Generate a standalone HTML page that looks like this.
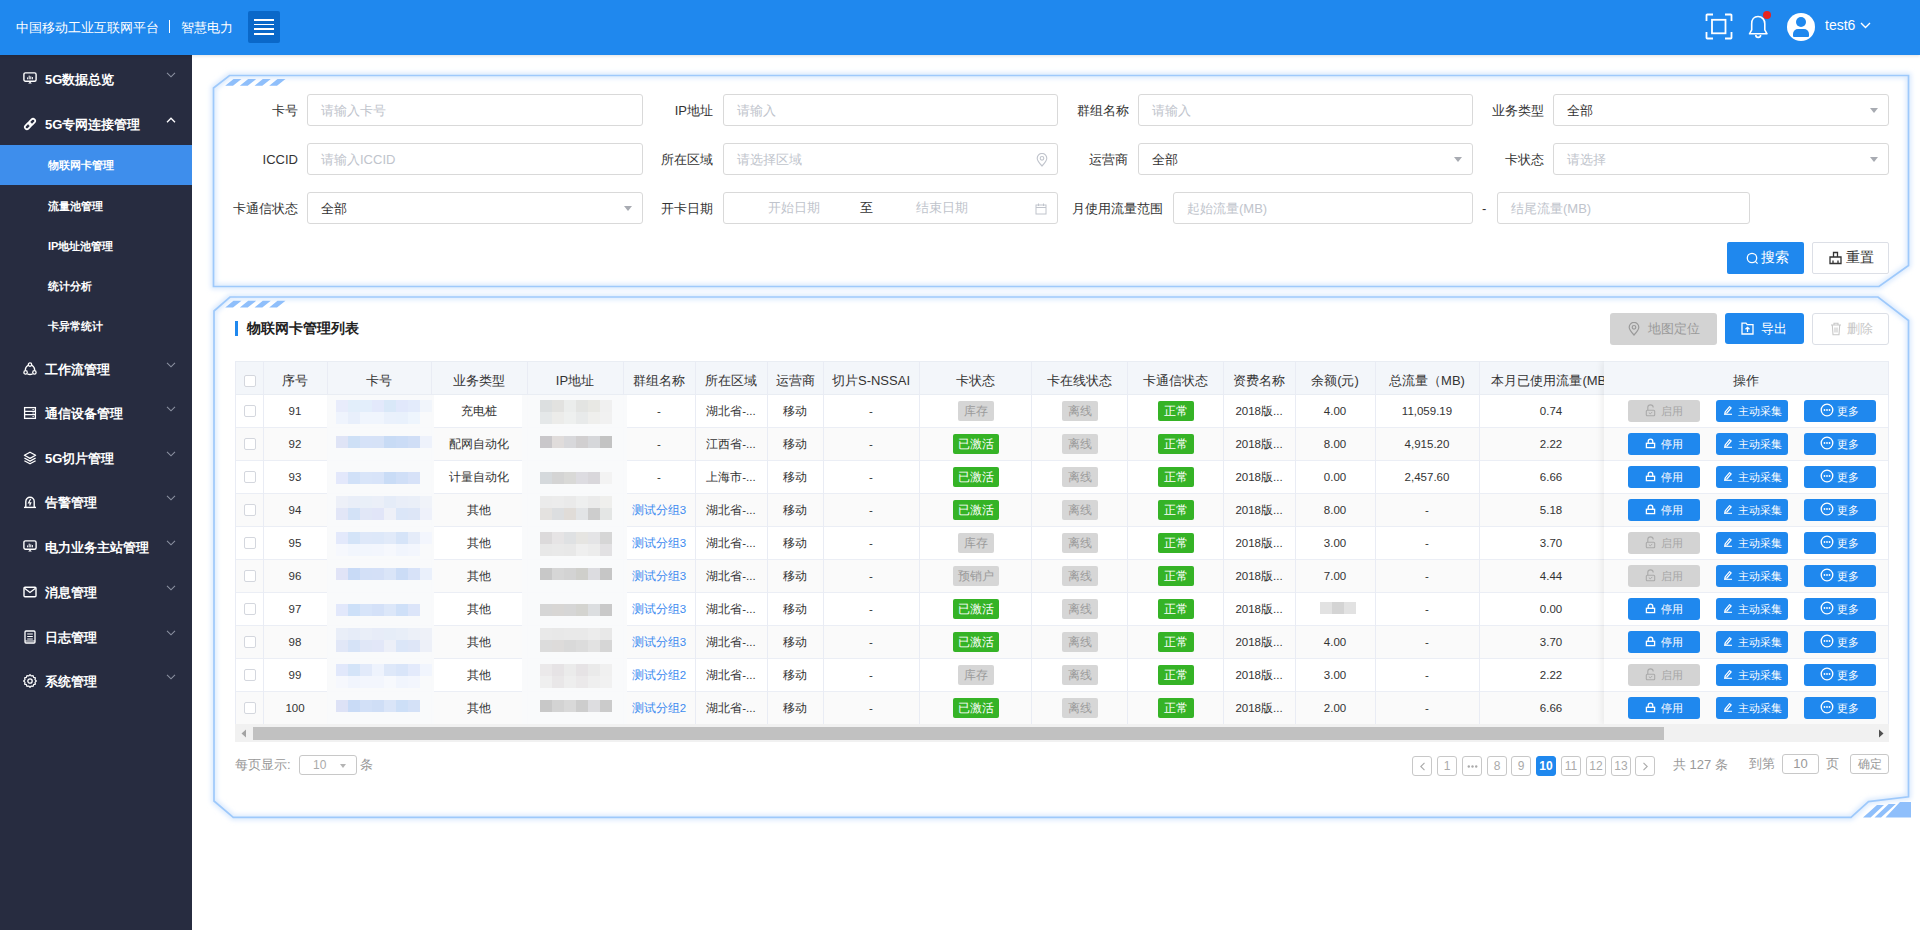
<!DOCTYPE html>
<html><head><meta charset="utf-8">
<style>
*{box-sizing:border-box;margin:0;padding:0}
html,body{width:1920px;height:930px;overflow:hidden;background:#fff;font-family:"Liberation Sans",sans-serif;color:#333}
.abs{position:absolute}
#hdr{position:absolute;left:0;top:0;width:1920px;height:55px;background:#1f88ee;z-index:5;box-shadow:0 1px 3px rgba(0,0,0,.12)}
#hdr .t{position:absolute;top:19px;font-size:13px;color:#fff;line-height:18px;white-space:nowrap}
#side{position:absolute;left:0;top:55px;width:192px;height:875px;background:#272c40;z-index:4}
.mi{position:absolute;left:0;width:192px;height:40px;color:#fff;font-size:13px;font-weight:bold;white-space:nowrap}
.mi .ic{position:absolute;left:23px;top:13px;width:14px;height:14px}
.mi .tx{position:absolute;left:45px;top:1px;line-height:40px}
.mi .ar{position:absolute;left:166px;top:13px;width:10px;height:6px}
.sub{position:absolute;left:0;width:192px;height:40px;color:#fff;font-size:11px;font-weight:600;line-height:40px;white-space:nowrap}
.sub span{position:absolute;left:48px}
.lbl{position:absolute;font-size:13px;color:#333;line-height:21px;text-align:right;white-space:nowrap}
.inp{position:absolute;height:32px;border:1px solid #d9d9d9;border-radius:3px;background:#fff;font-size:13px;line-height:30px;padding-left:13px;padding-top:1px;color:#c0c4cc;white-space:nowrap}
.inp.v{color:#333}
.caret{position:absolute;right:10px;top:13px;width:0;height:0;border-left:4px solid transparent;border-right:4px solid transparent;border-top:5px solid #a8abb2}
.th{top:0;height:33px;line-height:33px;padding-top:3px;text-align:center;font-size:13px;color:#333;white-space:nowrap;overflow:hidden}
.td{height:32px;line-height:32px;text-align:center;font-size:11.5px;color:#333;white-space:nowrap;overflow:hidden}
.tag{height:20px;line-height:20px;text-align:center;font-size:11.5px;border-radius:2px}
.btn{width:72px;height:22px;border-radius:3px;background:#1f88ee;color:#fff;font-size:11.2px;line-height:22px;white-space:nowrap}
.btn.dis{background:#d3d3d3;color:#a6a6a6}
.pg{top:756px;width:20px;height:20px;border:1px solid #c8c8c8;border-radius:3px;font-size:12px;line-height:18px;color:#aaa;text-align:center}
</style></head><body>
<div id="hdr">
  <div class="t" style="left:16px">中国移动工业互联网平台</div>
  <div class="abs" style="left:169px;top:20px;width:1px;height:13px;background:#fff"></div>
  <div class="t" style="left:181px">智慧电力</div>
  <div class="abs" style="left:248px;top:11px;width:32px;height:32px;background:#0a68c9;border-radius:2px">
    <div class="abs" style="left:6px;top:8px;width:20px;height:1.6px;background:#fff"></div>
    <div class="abs" style="left:6px;top:12.7px;width:20px;height:1.6px;background:#fff"></div>
    <div class="abs" style="left:6px;top:17.3px;width:20px;height:1.6px;background:#fff"></div>
    <div class="abs" style="left:6px;top:22.4px;width:20px;height:1.6px;background:#fff"></div>
  </div>
  <svg class="abs" style="left:1705px;top:13px" width="28" height="27" viewBox="0 0 28 27"><path d="M1.5 8V2.2a.7.7 0 0 1 .7-.7H8M20 1.5h5.8a.7.7 0 0 1 .7.7V8M26.5 19v5.8a.7.7 0 0 1-.7.7H20M8 25.5H2.2a.7.7 0 0 1-.7-.7V19" fill="none" stroke="#fff" stroke-width="1.8"/><rect x="7" y="6.8" width="13.5" height="13.5" fill="none" stroke="#fff" stroke-width="1.8"/></svg>
  <svg class="abs" style="left:1748px;top:14px" width="22" height="25" viewBox="0 0 22 25"><path d="M10 2.5c-4 0-6.3 3.2-6.3 7.2v6.2L1.5 19.8h17.5l-2.2-3.9V9.7c0-4-2.6-7.2-6.8-7.2z" fill="none" stroke="#fff" stroke-width="1.6" stroke-linejoin="round"/><path d="M7.8 21a2.4 2.4 0 0 0 4.8 0" fill="none" stroke="#fff" stroke-width="1.6"/></svg>
  <div class="abs" style="left:1763px;top:11px;width:8px;height:8px;border-radius:50%;background:#e8231e"></div>
  <div class="abs" style="left:1787px;top:13px;width:28px;height:28px;border-radius:50%;background:#fff;overflow:hidden">
    <div class="abs" style="left:9px;top:4px;width:10px;height:10px;border-radius:50%;background:#1f88ee"></div>
    <div class="abs" style="left:6px;top:16px;width:16px;height:8px;border-radius:5px 5px 1px 1px;background:#1f88ee"></div>
  </div>
  <div class="abs" style="left:1825px;top:16px;font-size:14px;line-height:18px;color:#fff">test6</div>
  <svg class="abs" style="left:1860px;top:22px" width="11" height="7" viewBox="0 0 11 7"><path d="M1 1l4.5 4.5L10 1" fill="none" stroke="#fff" stroke-width="1.4"/></svg>
</div>
<svg class="abs" style="left:0;top:0" width="1920" height="930" viewBox="0 0 1920 930">
  <defs>
    <filter id="gl" x="-5%" y="-20%" width="110%" height="140%"><feGaussianBlur stdDeviation="2.6"/></filter>
  </defs>
  <g id="c1">
    <path d="M213.5 88L229.5 75.5H1908.5V265.5L1879 286.5H213.5Z" fill="#fff"/>
    <path d="M213.5 88L229.5 75.5H1908.5V265.5L1879 286.5H213.5Z" fill="none" stroke="#d6e7fd" stroke-width="5" filter="url(#gl)"/>
    <path d="M213.5 88L229.5 75.5H1908.5V265.5L1879 286.5H213.5Z" fill="none" stroke="#9ec9fb" stroke-width="1.7"/>
    <path d="M225.2 85.8L233.5 79H241.5L233 85.8ZM239.8 85.8L248.2 79H256.2L247.7 85.8ZM254.5 85.8L262.8 79H270.8L262.3 85.8ZM269.2 85.8L277.5 79H285.5L277 85.8Z" fill="#8fbffb"/>
  </g>
  <g id="c2">
    <path d="M214 311L230 297H1878L1908.5 320.5V796.8L1868.5 801.6L1851 817.4H233.3L214 801Z" fill="#fff"/>
    <path d="M214 311L230 297H1878L1908.5 320.5V796.8L1868.5 801.6L1851 817.4H233.3L214 801Z" fill="none" stroke="#d6e7fd" stroke-width="5" filter="url(#gl)"/>
    <path d="M214 311L230 297H1878L1908.5 320.5V796.8L1868.5 801.6L1851 817.4H233.3L214 801Z" fill="none" stroke="#9ec9fb" stroke-width="1.7"/>
    <path d="M225.2 307.5L233.5 300.8H241.5L233 307.5ZM239.8 307.5L248.2 300.8H256.2L247.7 307.5ZM254.5 307.5L262.8 300.8H270.8L262.3 307.5ZM269.2 307.5L277.5 300.8H285.5L277 307.5Z" fill="#8fbffb"/>
    <path d="M1863 817.5L1877 805H1884L1870.6 817.5ZM1874.5 817.5L1888.7 804H1895.8L1881 817.5ZM1885.5 817.5L1900 802H1911V817.5Z" fill="#8fbffb"/>
  </g>
</svg>
<div id="form">
<div class="lbl" style="right:1622px;top:100px">卡号</div>
<div class="inp" style="left:307px;top:94px;width:336px">请输入卡号</div>
<div class="lbl" style="right:1207px;top:100px">IP地址</div>
<div class="inp" style="left:723px;top:94px;width:335px">请输入</div>
<div class="lbl" style="right:791px;top:100px">群组名称</div>
<div class="inp" style="left:1138px;top:94px;width:335px">请输入</div>
<div class="lbl" style="right:376px;top:100px">业务类型</div>
<div class="inp v" style="left:1553px;top:94px;width:336px">全部<i class="caret"></i></div>
<div class="lbl" style="right:1622px;top:149px">ICCID</div>
<div class="inp" style="left:307px;top:143px;width:336px">请输入ICCID</div>
<div class="lbl" style="right:1207px;top:149px">所在区域</div>
<div class="inp" style="left:723px;top:143px;width:335px">请选择区域<svg class="abs" style="right:9px;top:9px" width="12" height="14" viewBox="0 0 12 14"><path d="M6 13C3 9.8 1.2 7.3 1.2 5.2a4.8 4.8 0 0 1 9.6 0C10.8 7.3 9 9.8 6 13z" fill="none" stroke="#c0c4cc" stroke-width="1.1"/><circle cx="6" cy="5.3" r="1.8" fill="none" stroke="#c0c4cc" stroke-width="1.1"/></svg></div>
<div class="lbl" style="right:792px;top:149px">运营商</div>
<div class="inp v" style="left:1138px;top:143px;width:335px">全部<i class="caret"></i></div>
<div class="lbl" style="right:376px;top:149px">卡状态</div>
<div class="inp" style="left:1553px;top:143px;width:336px">请选择<i class="caret"></i></div>
<div class="lbl" style="right:1622px;top:198px">卡通信状态</div>
<div class="inp v" style="left:307px;top:192px;width:336px">全部<i class="caret"></i></div>
<div class="lbl" style="right:1207px;top:198px">开卡日期</div>
<div class="inp" style="left:723px;top:192px;width:335px;padding:0"><span class="abs" style="left:44px">开始日期</span><span class="abs" style="left:136px;color:#333">至</span><span class="abs" style="left:192px">结束日期</span><svg class="abs" style="right:10px;top:10px" width="12" height="12" viewBox="0 0 12 12"><rect x="1" y="2" width="10" height="9" fill="none" stroke="#c0c4cc" stroke-width="1"/><path d="M1 4.5h10M3.5 0.5v2.5M8.5 0.5v2.5" stroke="#c0c4cc" stroke-width="1"/></svg></div>
<div class="lbl" style="right:757px;top:198px">月使用流量范围</div>
<div class="inp" style="left:1173px;top:192px;width:300px">起始流量(MB)</div>
<div class="lbl" style="left:1482px;top:198px">-</div>
<div class="inp" style="left:1497px;top:192px;width:253px">结尾流量(MB)</div>
<div class="abs" style="left:1727px;top:242px;width:77px;height:32px;background:#1f88ee;border-radius:2px;color:#fff;font-size:14px;line-height:30px">
<svg class="abs" style="left:19px;top:10px" width="13" height="13" viewBox="0 0 13 13"><circle cx="6" cy="6" r="4.7" fill="none" stroke="#fff" stroke-width="1.3"/><path d="M9.4 9.4l2.2 2.2" stroke="#fff" stroke-width="1.3"/></svg>
<span class="abs" style="left:34px">搜索</span></div>
<div class="abs" style="left:1812px;top:242px;width:77px;height:32px;background:#fff;border:1px solid #dcdfe6;border-radius:2px;color:#333;font-size:14px;line-height:29px">
<svg class="abs" style="left:16px;top:8px" width="13" height="14" viewBox="0 0 13 14"><path d="M4.5 6V1.5h4V6M1 6h11v6.5H1zM4 12.5V9.5M9 12.5V9.5" fill="none" stroke="#333" stroke-width="1.3"/></svg>
<span class="abs" style="left:33px">重置</span></div>
</div>
<!--TABLE-->
<div class="abs" style="left:235px;top:321px;width:3px;height:15px;background:#1f88ee"></div>
<div class="abs" style="left:247px;top:318px;font-size:14px;line-height:20px;font-weight:bold;color:#222">物联网卡管理列表</div>
<div class="abs" style="left:1610px;top:313px;width:107px;height:32px;background:#d3d3d3;border-radius:3px;color:#9a9a9a;font-size:13px;line-height:32px">
<svg class="abs" style="left:18px;top:9px" width="12" height="14" viewBox="0 0 12 14"><path d="M6 13C3 9.8 1.2 7.3 1.2 5.2a4.8 4.8 0 0 1 9.6 0C10.8 7.3 9 9.8 6 13z" fill="none" stroke="#9a9a9a" stroke-width="1.2"/><circle cx="6" cy="5.3" r="1.8" fill="none" stroke="#9a9a9a" stroke-width="1.2"/></svg>
<span class="abs" style="left:38px">地图定位</span></div>
<div class="abs" style="left:1725px;top:313px;width:79px;height:31px;background:#1f88ee;border-radius:3px;color:#fff;font-size:13px;line-height:31px">
<svg class="abs" style="left:16px;top:9px" width="13" height="13" viewBox="0 0 13 13"><path d="M1 1.2h4l1.2 1.5H12V12H1z" fill="none" stroke="#fff" stroke-width="1.3"/><path d="M6.5 10V5.5M4.5 7.3l2-2 2 2" fill="none" stroke="#fff" stroke-width="1.3"/></svg>
<span class="abs" style="left:36px">导出</span></div>
<div class="abs" style="left:1812px;top:313px;width:77px;height:32px;background:#fff;border:1px solid #dcdfe6;border-radius:3px;color:#c8c8c8;font-size:13px;line-height:30px">
<svg class="abs" style="left:17px;top:8px" width="12" height="14" viewBox="0 0 12 14"><path d="M1 3h10M4 3V1.3h4V3M2.3 3l.7 9.7h6l.7-9.7M5 5.5v5M7 5.5v5" fill="none" stroke="#c8c8c8" stroke-width="1.1"/></svg>
<span class="abs" style="left:34px">删除</span></div>
<div class="abs" style="left:235px;top:361px;width:1654px;height:364px;overflow:hidden;font-size:12px;color:#333">
<div class="abs" style="left:0;top:0;width:1653px;height:34px;background:#f3f6fa;border-top:1px solid #e9edf3;border-bottom:1px solid #e9edf3"></div>
<div class="abs" style="left:9px;top:14px;width:12px;height:12px;border:1px solid #d4d7de;border-radius:2px;background:#fff"></div>
<div class="abs th" style="left:28px;width:64px">序号</div>
<div class="abs th" style="left:92px;width:104px">卡号</div>
<div class="abs th" style="left:196px;width:96px">业务类型</div>
<div class="abs th" style="left:292px;width:96px">IP地址</div>
<div class="abs th" style="left:388px;width:72px">群组名称</div>
<div class="abs th" style="left:460px;width:72px">所在区域</div>
<div class="abs th" style="left:532px;width:56px">运营商</div>
<div class="abs th" style="left:588px;width:96px">切片S-NSSAI</div>
<div class="abs th" style="left:684px;width:112px">卡状态</div>
<div class="abs th" style="left:796px;width:96px">卡在线状态</div>
<div class="abs th" style="left:892px;width:96px">卡通信状态</div>
<div class="abs th" style="left:988px;width:72px">资费名称</div>
<div class="abs th" style="left:1060px;width:80px">余额(元)</div>
<div class="abs th" style="left:1140px;width:104px">总流量（MB)</div>
<div class="abs th" style="left:1244px;width:144px">本月已使用流量(MB)</div>
<div class="abs" style="left:0;top:34px;width:1653px;height:33px;background:#fff;border-bottom:1px solid #ebeef5"></div>
<div class="abs" style="left:0;top:67px;width:1653px;height:33px;background:#fafafa;border-bottom:1px solid #ebeef5"></div>
<div class="abs" style="left:0;top:100px;width:1653px;height:33px;background:#fff;border-bottom:1px solid #ebeef5"></div>
<div class="abs" style="left:0;top:133px;width:1653px;height:33px;background:#fafafa;border-bottom:1px solid #ebeef5"></div>
<div class="abs" style="left:0;top:166px;width:1653px;height:33px;background:#fff;border-bottom:1px solid #ebeef5"></div>
<div class="abs" style="left:0;top:199px;width:1653px;height:33px;background:#fafafa;border-bottom:1px solid #ebeef5"></div>
<div class="abs" style="left:0;top:232px;width:1653px;height:33px;background:#fff;border-bottom:1px solid #ebeef5"></div>
<div class="abs" style="left:0;top:265px;width:1653px;height:33px;background:#fafafa;border-bottom:1px solid #ebeef5"></div>
<div class="abs" style="left:0;top:298px;width:1653px;height:33px;background:#fff;border-bottom:1px solid #ebeef5"></div>
<div class="abs" style="left:0;top:331px;width:1653px;height:33px;background:#fafafa;border-bottom:1px solid #ebeef5"></div>
<div class="abs" style="left:0px;top:0;width:1px;height:364px;background:#e9ecf4"></div>
<div class="abs" style="left:28px;top:0;width:1px;height:364px;background:#e9ecf4"></div>
<div class="abs" style="left:92px;top:0;width:1px;height:364px;background:#e9ecf4"></div>
<div class="abs" style="left:196px;top:0;width:1px;height:364px;background:#e9ecf4"></div>
<div class="abs" style="left:292px;top:0;width:1px;height:364px;background:#e9ecf4"></div>
<div class="abs" style="left:388px;top:0;width:1px;height:364px;background:#e9ecf4"></div>
<div class="abs" style="left:460px;top:0;width:1px;height:364px;background:#e9ecf4"></div>
<div class="abs" style="left:532px;top:0;width:1px;height:364px;background:#e9ecf4"></div>
<div class="abs" style="left:588px;top:0;width:1px;height:364px;background:#e9ecf4"></div>
<div class="abs" style="left:684px;top:0;width:1px;height:364px;background:#e9ecf4"></div>
<div class="abs" style="left:796px;top:0;width:1px;height:364px;background:#e9ecf4"></div>
<div class="abs" style="left:892px;top:0;width:1px;height:364px;background:#e9ecf4"></div>
<div class="abs" style="left:988px;top:0;width:1px;height:364px;background:#e9ecf4"></div>
<div class="abs" style="left:1060px;top:0;width:1px;height:364px;background:#e9ecf4"></div>
<div class="abs" style="left:1140px;top:0;width:1px;height:364px;background:#e9ecf4"></div>
<div class="abs" style="left:1244px;top:0;width:1px;height:364px;background:#e9ecf4"></div>
<div class="abs" style="left:9px;top:44px;width:12px;height:12px;border:1px solid #d4d7de;border-radius:2px;background:#fff"></div>
<div class="abs td" style="left:28px;top:34px;width:64px;">91</div>
<div class="abs td" style="left:196px;top:34px;width:96px;">充电桩</div>
<div class="abs td" style="left:388px;top:34px;width:72px;">-</div>
<div class="abs td" style="left:460px;top:34px;width:72px;">湖北省-...</div>
<div class="abs td" style="left:532px;top:34px;width:56px;">移动</div>
<div class="abs td" style="left:588px;top:34px;width:96px;">-</div>
<div class="abs tag" style="left:723.0px;top:40px;width:36px;background:#d6d6d6;color:#9b9b9b">库存</div>
<div class="abs tag" style="left:827.0px;top:40px;width:36px;background:#d6d6d6;color:#9b9b9b">离线</div>
<div class="abs tag" style="left:923.0px;top:40px;width:36px;background:#35b326;color:#fff">正常</div>
<div class="abs td" style="left:988px;top:34px;width:72px;">2018版...</div>
<div class="abs td" style="left:1060px;top:34px;width:80px;">4.00</div>
<div class="abs td" style="left:1140px;top:34px;width:104px;">11,059.19</div>
<div class="abs td" style="left:1244px;top:34px;width:144px;">0.74</div>
<div class="abs" style="left:92px;top:34px;width:107px;height:33px;background:rgba(249,250,251,.93)"></div>
<div class="abs" style="left:287px;top:34px;width:105px;height:33px;background:rgba(249,250,251,.93)"></div>
<div class="abs" style="left:101px;top:39px;width:12px;height:12px;background:#e8ecfb"></div>
<div class="abs" style="left:113px;top:39px;width:12px;height:12px;background:#e2eefa"></div>
<div class="abs" style="left:125px;top:39px;width:12px;height:12px;background:#e3eefb"></div>
<div class="abs" style="left:137px;top:39px;width:12px;height:12px;background:#e3e9fb"></div>
<div class="abs" style="left:149px;top:39px;width:12px;height:12px;background:#d9e8f8"></div>
<div class="abs" style="left:161px;top:39px;width:12px;height:12px;background:#e1e8fb"></div>
<div class="abs" style="left:173px;top:39px;width:12px;height:12px;background:#e3ebfb"></div>
<div class="abs" style="left:185px;top:39px;width:12px;height:12px;background:#f1f5fb"></div>
<div class="abs" style="left:305px;top:39px;width:12px;height:12px;background:#dcdfe0"></div>
<div class="abs" style="left:317px;top:39px;width:12px;height:12px;background:#e2e2e0"></div>
<div class="abs" style="left:329px;top:39px;width:12px;height:12px;background:#ebedec"></div>
<div class="abs" style="left:341px;top:39px;width:12px;height:12px;background:#e3e4e2"></div>
<div class="abs" style="left:353px;top:39px;width:12px;height:12px;background:#e8e8e4"></div>
<div class="abs" style="left:365px;top:39px;width:12px;height:12px;background:#f0f0f0"></div>
<div class="abs" style="left:101px;top:51px;width:12px;height:12px;background:#eff4fd"></div>
<div class="abs" style="left:113px;top:51px;width:12px;height:12px;background:#e8effb"></div>
<div class="abs" style="left:125px;top:51px;width:12px;height:12px;background:#f0f5fd"></div>
<div class="abs" style="left:137px;top:51px;width:12px;height:12px;background:#f0f5fd"></div>
<div class="abs" style="left:149px;top:51px;width:12px;height:12px;background:#eaf1fc"></div>
<div class="abs" style="left:161px;top:51px;width:12px;height:12px;background:#e9f1fc"></div>
<div class="abs" style="left:173px;top:51px;width:12px;height:12px;background:#eef5fd"></div>
<div class="abs" style="left:305px;top:51px;width:12px;height:12px;background:#e5e8e9"></div>
<div class="abs" style="left:317px;top:51px;width:12px;height:12px;background:#ececea"></div>
<div class="abs" style="left:329px;top:51px;width:12px;height:12px;background:#eef0ef"></div>
<div class="abs" style="left:341px;top:51px;width:12px;height:12px;background:#e8eaea"></div>
<div class="abs" style="left:353px;top:51px;width:12px;height:12px;background:#efefed"></div>
<div class="abs" style="left:365px;top:51px;width:12px;height:12px;background:#f1f1f1"></div>
<div class="abs" style="left:9px;top:77px;width:12px;height:12px;border:1px solid #d4d7de;border-radius:2px;background:#fff"></div>
<div class="abs td" style="left:28px;top:67px;width:64px;">92</div>
<div class="abs td" style="left:196px;top:67px;width:96px;">配网自动化</div>
<div class="abs td" style="left:388px;top:67px;width:72px;">-</div>
<div class="abs td" style="left:460px;top:67px;width:72px;">江西省-...</div>
<div class="abs td" style="left:532px;top:67px;width:56px;">移动</div>
<div class="abs td" style="left:588px;top:67px;width:96px;">-</div>
<div class="abs tag" style="left:718.0px;top:73px;width:46px;background:#35b326;color:#fff">已激活</div>
<div class="abs tag" style="left:827.0px;top:73px;width:36px;background:#d6d6d6;color:#9b9b9b">离线</div>
<div class="abs tag" style="left:923.0px;top:73px;width:36px;background:#35b326;color:#fff">正常</div>
<div class="abs td" style="left:988px;top:67px;width:72px;">2018版...</div>
<div class="abs td" style="left:1060px;top:67px;width:80px;">8.00</div>
<div class="abs td" style="left:1140px;top:67px;width:104px;">4,915.20</div>
<div class="abs td" style="left:1244px;top:67px;width:144px;">2.22</div>
<div class="abs" style="left:92px;top:67px;width:107px;height:33px;background:rgba(249,250,251,.93)"></div>
<div class="abs" style="left:287px;top:67px;width:105px;height:33px;background:rgba(249,250,251,.93)"></div>
<div class="abs" style="left:101px;top:75px;width:12px;height:12px;background:#dfe4f6"></div>
<div class="abs" style="left:113px;top:75px;width:12px;height:12px;background:#cee0f6"></div>
<div class="abs" style="left:125px;top:75px;width:12px;height:12px;background:#d6e2f8"></div>
<div class="abs" style="left:137px;top:75px;width:12px;height:12px;background:#d6e2f7"></div>
<div class="abs" style="left:149px;top:75px;width:12px;height:12px;background:#c8dbf5"></div>
<div class="abs" style="left:161px;top:75px;width:12px;height:12px;background:#cbdcf6"></div>
<div class="abs" style="left:173px;top:75px;width:12px;height:12px;background:#d0def6"></div>
<div class="abs" style="left:185px;top:75px;width:12px;height:12px;background:#eef2fb"></div>
<div class="abs" style="left:305px;top:75px;width:12px;height:12px;background:#c9c7ca"></div>
<div class="abs" style="left:317px;top:75px;width:12px;height:12px;background:#e0dcdb"></div>
<div class="abs" style="left:329px;top:75px;width:12px;height:12px;background:#d8d8db"></div>
<div class="abs" style="left:341px;top:75px;width:12px;height:12px;background:#d1cfd0"></div>
<div class="abs" style="left:353px;top:75px;width:12px;height:12px;background:#d6d7da"></div>
<div class="abs" style="left:365px;top:75px;width:12px;height:12px;background:#c3c3c3"></div>
<div class="abs" style="left:9px;top:110px;width:12px;height:12px;border:1px solid #d4d7de;border-radius:2px;background:#fff"></div>
<div class="abs td" style="left:28px;top:100px;width:64px;">93</div>
<div class="abs td" style="left:196px;top:100px;width:96px;">计量自动化</div>
<div class="abs td" style="left:388px;top:100px;width:72px;">-</div>
<div class="abs td" style="left:460px;top:100px;width:72px;">上海市-...</div>
<div class="abs td" style="left:532px;top:100px;width:56px;">移动</div>
<div class="abs td" style="left:588px;top:100px;width:96px;">-</div>
<div class="abs tag" style="left:718.0px;top:106px;width:46px;background:#35b326;color:#fff">已激活</div>
<div class="abs tag" style="left:827.0px;top:106px;width:36px;background:#d6d6d6;color:#9b9b9b">离线</div>
<div class="abs tag" style="left:923.0px;top:106px;width:36px;background:#35b326;color:#fff">正常</div>
<div class="abs td" style="left:988px;top:100px;width:72px;">2018版...</div>
<div class="abs td" style="left:1060px;top:100px;width:80px;">0.00</div>
<div class="abs td" style="left:1140px;top:100px;width:104px;">2,457.60</div>
<div class="abs td" style="left:1244px;top:100px;width:144px;">6.66</div>
<div class="abs" style="left:92px;top:100px;width:107px;height:33px;background:rgba(249,250,251,.93)"></div>
<div class="abs" style="left:287px;top:100px;width:105px;height:33px;background:rgba(249,250,251,.93)"></div>
<div class="abs" style="left:101px;top:111px;width:12px;height:12px;background:#e3e8fb"></div>
<div class="abs" style="left:113px;top:111px;width:12px;height:12px;background:#d1e1f8"></div>
<div class="abs" style="left:125px;top:111px;width:12px;height:12px;background:#d9e5f9"></div>
<div class="abs" style="left:137px;top:111px;width:12px;height:12px;background:#d8e4f9"></div>
<div class="abs" style="left:149px;top:111px;width:12px;height:12px;background:#c9dcf6"></div>
<div class="abs" style="left:161px;top:111px;width:12px;height:12px;background:#d0dff7"></div>
<div class="abs" style="left:173px;top:111px;width:12px;height:12px;background:#d7e2f8"></div>
<div class="abs" style="left:305px;top:111px;width:12px;height:12px;background:#d5d9dc"></div>
<div class="abs" style="left:317px;top:111px;width:12px;height:12px;background:#d4d4d4"></div>
<div class="abs" style="left:329px;top:111px;width:12px;height:12px;background:#d9d9d7"></div>
<div class="abs" style="left:341px;top:111px;width:12px;height:12px;background:#dddce1"></div>
<div class="abs" style="left:353px;top:111px;width:12px;height:12px;background:#d9d7db"></div>
<div class="abs" style="left:365px;top:111px;width:12px;height:12px;background:#f3f3f3"></div>
<div class="abs" style="left:9px;top:143px;width:12px;height:12px;border:1px solid #d4d7de;border-radius:2px;background:#fff"></div>
<div class="abs td" style="left:28px;top:133px;width:64px;">94</div>
<div class="abs td" style="left:196px;top:133px;width:96px;">其他</div>
<div class="abs td" style="left:388px;top:133px;width:72px;color:#3d8bf0">测试分组3</div>
<div class="abs td" style="left:460px;top:133px;width:72px;">湖北省-...</div>
<div class="abs td" style="left:532px;top:133px;width:56px;">移动</div>
<div class="abs td" style="left:588px;top:133px;width:96px;">-</div>
<div class="abs tag" style="left:718.0px;top:139px;width:46px;background:#35b326;color:#fff">已激活</div>
<div class="abs tag" style="left:827.0px;top:139px;width:36px;background:#d6d6d6;color:#9b9b9b">离线</div>
<div class="abs tag" style="left:923.0px;top:139px;width:36px;background:#35b326;color:#fff">正常</div>
<div class="abs td" style="left:988px;top:133px;width:72px;">2018版...</div>
<div class="abs td" style="left:1060px;top:133px;width:80px;">8.00</div>
<div class="abs td" style="left:1140px;top:133px;width:104px;">-</div>
<div class="abs td" style="left:1244px;top:133px;width:144px;">5.18</div>
<div class="abs" style="left:92px;top:133px;width:107px;height:33px;background:rgba(249,250,251,.93)"></div>
<div class="abs" style="left:287px;top:133px;width:105px;height:33px;background:rgba(249,250,251,.93)"></div>
<div class="abs" style="left:101px;top:135px;width:12px;height:12px;background:#edf0f8"></div>
<div class="abs" style="left:113px;top:135px;width:12px;height:12px;background:#e9eef8"></div>
<div class="abs" style="left:125px;top:135px;width:12px;height:12px;background:#e9eff8"></div>
<div class="abs" style="left:137px;top:135px;width:12px;height:12px;background:#ebeff8"></div>
<div class="abs" style="left:149px;top:135px;width:12px;height:12px;background:#e5ecf8"></div>
<div class="abs" style="left:161px;top:135px;width:12px;height:12px;background:#e9eef8"></div>
<div class="abs" style="left:173px;top:135px;width:12px;height:12px;background:#eaeff8"></div>
<div class="abs" style="left:185px;top:135px;width:12px;height:12px;background:#f0f3f9"></div>
<div class="abs" style="left:305px;top:135px;width:12px;height:12px;background:#ebebeb"></div>
<div class="abs" style="left:317px;top:135px;width:12px;height:12px;background:#ececec"></div>
<div class="abs" style="left:329px;top:135px;width:12px;height:12px;background:#eaeaea"></div>
<div class="abs" style="left:341px;top:135px;width:12px;height:12px;background:#eeefef"></div>
<div class="abs" style="left:353px;top:135px;width:12px;height:12px;background:#ebebeb"></div>
<div class="abs" style="left:365px;top:135px;width:12px;height:12px;background:#efefed"></div>
<div class="abs" style="left:101px;top:147px;width:12px;height:12px;background:#e2e6f7"></div>
<div class="abs" style="left:113px;top:147px;width:12px;height:12px;background:#d3e2f7"></div>
<div class="abs" style="left:125px;top:147px;width:12px;height:12px;background:#e1e7f7"></div>
<div class="abs" style="left:137px;top:147px;width:12px;height:12px;background:#e1e5f8"></div>
<div class="abs" style="left:149px;top:147px;width:12px;height:12px;background:#eef0f8"></div>
<div class="abs" style="left:161px;top:147px;width:12px;height:12px;background:#dbe6f8"></div>
<div class="abs" style="left:173px;top:147px;width:12px;height:12px;background:#dde6f7"></div>
<div class="abs" style="left:185px;top:147px;width:12px;height:12px;background:#eef1fa"></div>
<div class="abs" style="left:305px;top:147px;width:12px;height:12px;background:#e4e2e0"></div>
<div class="abs" style="left:317px;top:147px;width:12px;height:12px;background:#dcdee0"></div>
<div class="abs" style="left:329px;top:147px;width:12px;height:12px;background:#e0dcd8"></div>
<div class="abs" style="left:341px;top:147px;width:12px;height:12px;background:#e2e4e6"></div>
<div class="abs" style="left:353px;top:147px;width:12px;height:12px;background:#cdcdcd"></div>
<div class="abs" style="left:365px;top:147px;width:12px;height:12px;background:#e4e6e5"></div>
<div class="abs" style="left:9px;top:176px;width:12px;height:12px;border:1px solid #d4d7de;border-radius:2px;background:#fff"></div>
<div class="abs td" style="left:28px;top:166px;width:64px;">95</div>
<div class="abs td" style="left:196px;top:166px;width:96px;">其他</div>
<div class="abs td" style="left:388px;top:166px;width:72px;color:#3d8bf0">测试分组3</div>
<div class="abs td" style="left:460px;top:166px;width:72px;">湖北省-...</div>
<div class="abs td" style="left:532px;top:166px;width:56px;">移动</div>
<div class="abs td" style="left:588px;top:166px;width:96px;">-</div>
<div class="abs tag" style="left:723.0px;top:172px;width:36px;background:#d6d6d6;color:#9b9b9b">库存</div>
<div class="abs tag" style="left:827.0px;top:172px;width:36px;background:#d6d6d6;color:#9b9b9b">离线</div>
<div class="abs tag" style="left:923.0px;top:172px;width:36px;background:#35b326;color:#fff">正常</div>
<div class="abs td" style="left:988px;top:166px;width:72px;">2018版...</div>
<div class="abs td" style="left:1060px;top:166px;width:80px;">3.00</div>
<div class="abs td" style="left:1140px;top:166px;width:104px;">-</div>
<div class="abs td" style="left:1244px;top:166px;width:144px;">3.70</div>
<div class="abs" style="left:92px;top:166px;width:107px;height:33px;background:rgba(249,250,251,.93)"></div>
<div class="abs" style="left:287px;top:166px;width:105px;height:33px;background:rgba(249,250,251,.93)"></div>
<div class="abs" style="left:101px;top:171px;width:12px;height:12px;background:#e3e9fb"></div>
<div class="abs" style="left:113px;top:171px;width:12px;height:12px;background:#d4e4f8"></div>
<div class="abs" style="left:125px;top:171px;width:12px;height:12px;background:#dee8f9"></div>
<div class="abs" style="left:137px;top:171px;width:12px;height:12px;background:#dde8f9"></div>
<div class="abs" style="left:149px;top:171px;width:12px;height:12px;background:#e1eaf9"></div>
<div class="abs" style="left:161px;top:171px;width:12px;height:12px;background:#d6e4f8"></div>
<div class="abs" style="left:173px;top:171px;width:12px;height:12px;background:#e5ecf9"></div>
<div class="abs" style="left:185px;top:171px;width:12px;height:12px;background:#f3f6fd"></div>
<div class="abs" style="left:305px;top:171px;width:12px;height:12px;background:#dcdadb"></div>
<div class="abs" style="left:317px;top:171px;width:12px;height:12px;background:#e6e4e5"></div>
<div class="abs" style="left:329px;top:171px;width:12px;height:12px;background:#dfe1e3"></div>
<div class="abs" style="left:341px;top:171px;width:12px;height:12px;background:#e6e5e2"></div>
<div class="abs" style="left:353px;top:171px;width:12px;height:12px;background:#e4e4e6"></div>
<div class="abs" style="left:365px;top:171px;width:12px;height:12px;background:#d6d6d6"></div>
<div class="abs" style="left:101px;top:183px;width:12px;height:12px;background:#f6f8fd"></div>
<div class="abs" style="left:113px;top:183px;width:12px;height:12px;background:#f2f6fd"></div>
<div class="abs" style="left:125px;top:183px;width:12px;height:12px;background:#f2f6fd"></div>
<div class="abs" style="left:137px;top:183px;width:12px;height:12px;background:#f3f6fd"></div>
<div class="abs" style="left:149px;top:183px;width:12px;height:12px;background:#f6f8fd"></div>
<div class="abs" style="left:161px;top:183px;width:12px;height:12px;background:#f1f5fd"></div>
<div class="abs" style="left:173px;top:183px;width:12px;height:12px;background:#f3f6fd"></div>
<div class="abs" style="left:305px;top:183px;width:12px;height:12px;background:#e8e8e8"></div>
<div class="abs" style="left:317px;top:183px;width:12px;height:12px;background:#e9e9e9"></div>
<div class="abs" style="left:329px;top:183px;width:12px;height:12px;background:#e8e8e8"></div>
<div class="abs" style="left:341px;top:183px;width:12px;height:12px;background:#efefef"></div>
<div class="abs" style="left:353px;top:183px;width:12px;height:12px;background:#ececec"></div>
<div class="abs" style="left:365px;top:183px;width:12px;height:12px;background:#e2e1e3"></div>
<div class="abs" style="left:9px;top:209px;width:12px;height:12px;border:1px solid #d4d7de;border-radius:2px;background:#fff"></div>
<div class="abs td" style="left:28px;top:199px;width:64px;">96</div>
<div class="abs td" style="left:196px;top:199px;width:96px;">其他</div>
<div class="abs td" style="left:388px;top:199px;width:72px;color:#3d8bf0">测试分组3</div>
<div class="abs td" style="left:460px;top:199px;width:72px;">湖北省-...</div>
<div class="abs td" style="left:532px;top:199px;width:56px;">移动</div>
<div class="abs td" style="left:588px;top:199px;width:96px;">-</div>
<div class="abs tag" style="left:718.0px;top:205px;width:46px;background:#d6d6d6;color:#9b9b9b">预销户</div>
<div class="abs tag" style="left:827.0px;top:205px;width:36px;background:#d6d6d6;color:#9b9b9b">离线</div>
<div class="abs tag" style="left:923.0px;top:205px;width:36px;background:#35b326;color:#fff">正常</div>
<div class="abs td" style="left:988px;top:199px;width:72px;">2018版...</div>
<div class="abs td" style="left:1060px;top:199px;width:80px;">7.00</div>
<div class="abs td" style="left:1140px;top:199px;width:104px;">-</div>
<div class="abs td" style="left:1244px;top:199px;width:144px;">4.44</div>
<div class="abs" style="left:92px;top:199px;width:107px;height:33px;background:rgba(249,250,251,.93)"></div>
<div class="abs" style="left:287px;top:199px;width:105px;height:33px;background:rgba(249,250,251,.93)"></div>
<div class="abs" style="left:101px;top:207px;width:12px;height:12px;background:#e1e4f7"></div>
<div class="abs" style="left:113px;top:207px;width:12px;height:12px;background:#c8daf6"></div>
<div class="abs" style="left:125px;top:207px;width:12px;height:12px;background:#d3e0f7"></div>
<div class="abs" style="left:137px;top:207px;width:12px;height:12px;background:#d4e0f7"></div>
<div class="abs" style="left:149px;top:207px;width:12px;height:12px;background:#dae5f8"></div>
<div class="abs" style="left:161px;top:207px;width:12px;height:12px;background:#cbdcf6"></div>
<div class="abs" style="left:173px;top:207px;width:12px;height:12px;background:#d7e2f8"></div>
<div class="abs" style="left:185px;top:207px;width:12px;height:12px;background:#eaf0fb"></div>
<div class="abs" style="left:305px;top:207px;width:12px;height:12px;background:#c8c8c8"></div>
<div class="abs" style="left:317px;top:207px;width:12px;height:12px;background:#d6d6d6"></div>
<div class="abs" style="left:329px;top:207px;width:12px;height:12px;background:#d3d3d3"></div>
<div class="abs" style="left:341px;top:207px;width:12px;height:12px;background:#cfcfcb"></div>
<div class="abs" style="left:353px;top:207px;width:12px;height:12px;background:#dcdce0"></div>
<div class="abs" style="left:365px;top:207px;width:12px;height:12px;background:#c6c6c6"></div>
<div class="abs" style="left:9px;top:242px;width:12px;height:12px;border:1px solid #d4d7de;border-radius:2px;background:#fff"></div>
<div class="abs td" style="left:28px;top:232px;width:64px;">97</div>
<div class="abs td" style="left:196px;top:232px;width:96px;">其他</div>
<div class="abs td" style="left:388px;top:232px;width:72px;color:#3d8bf0">测试分组3</div>
<div class="abs td" style="left:460px;top:232px;width:72px;">湖北省-...</div>
<div class="abs td" style="left:532px;top:232px;width:56px;">移动</div>
<div class="abs td" style="left:588px;top:232px;width:96px;">-</div>
<div class="abs tag" style="left:718.0px;top:238px;width:46px;background:#35b326;color:#fff">已激活</div>
<div class="abs tag" style="left:827.0px;top:238px;width:36px;background:#d6d6d6;color:#9b9b9b">离线</div>
<div class="abs tag" style="left:923.0px;top:238px;width:36px;background:#35b326;color:#fff">正常</div>
<div class="abs td" style="left:988px;top:232px;width:72px;">2018版...</div>
<div class="abs td" style="left:1060px;top:232px;width:80px;"></div>
<div class="abs td" style="left:1140px;top:232px;width:104px;">-</div>
<div class="abs td" style="left:1244px;top:232px;width:144px;">0.00</div>
<div class="abs" style="left:92px;top:232px;width:107px;height:33px;background:rgba(249,250,251,.93)"></div>
<div class="abs" style="left:287px;top:232px;width:105px;height:33px;background:rgba(249,250,251,.93)"></div>
<div class="abs" style="left:101px;top:243px;width:12px;height:12px;background:#e2e8fb"></div>
<div class="abs" style="left:113px;top:243px;width:12px;height:12px;background:#cde0f8"></div>
<div class="abs" style="left:125px;top:243px;width:12px;height:12px;background:#d7e4f9"></div>
<div class="abs" style="left:137px;top:243px;width:12px;height:12px;background:#d4e1f8"></div>
<div class="abs" style="left:149px;top:243px;width:12px;height:12px;background:#dce7f9"></div>
<div class="abs" style="left:161px;top:243px;width:12px;height:12px;background:#cfe0f8"></div>
<div class="abs" style="left:173px;top:243px;width:12px;height:12px;background:#dce5f9"></div>
<div class="abs" style="left:305px;top:243px;width:12px;height:12px;background:#d6d6d6"></div>
<div class="abs" style="left:317px;top:243px;width:12px;height:12px;background:#d8d6d4"></div>
<div class="abs" style="left:329px;top:243px;width:12px;height:12px;background:#d6d6d6"></div>
<div class="abs" style="left:341px;top:243px;width:12px;height:12px;background:#d4d4d0"></div>
<div class="abs" style="left:353px;top:243px;width:12px;height:12px;background:#dcdee0"></div>
<div class="abs" style="left:365px;top:243px;width:12px;height:12px;background:#c9c9c9"></div>
<div class="abs" style="left:1085px;top:241px;width:36px;height:12px;background:#e2e2e2"></div>
<div class="abs" style="left:1097px;top:241px;width:12px;height:12px;background:#d4d4d4"></div>
<div class="abs" style="left:9px;top:275px;width:12px;height:12px;border:1px solid #d4d7de;border-radius:2px;background:#fff"></div>
<div class="abs td" style="left:28px;top:265px;width:64px;">98</div>
<div class="abs td" style="left:196px;top:265px;width:96px;">其他</div>
<div class="abs td" style="left:388px;top:265px;width:72px;color:#3d8bf0">测试分组3</div>
<div class="abs td" style="left:460px;top:265px;width:72px;">湖北省-...</div>
<div class="abs td" style="left:532px;top:265px;width:56px;">移动</div>
<div class="abs td" style="left:588px;top:265px;width:96px;">-</div>
<div class="abs tag" style="left:718.0px;top:271px;width:46px;background:#35b326;color:#fff">已激活</div>
<div class="abs tag" style="left:827.0px;top:271px;width:36px;background:#d6d6d6;color:#9b9b9b">离线</div>
<div class="abs tag" style="left:923.0px;top:271px;width:36px;background:#35b326;color:#fff">正常</div>
<div class="abs td" style="left:988px;top:265px;width:72px;">2018版...</div>
<div class="abs td" style="left:1060px;top:265px;width:80px;">4.00</div>
<div class="abs td" style="left:1140px;top:265px;width:104px;">-</div>
<div class="abs td" style="left:1244px;top:265px;width:144px;">3.70</div>
<div class="abs" style="left:92px;top:265px;width:107px;height:33px;background:rgba(249,250,251,.93)"></div>
<div class="abs" style="left:287px;top:265px;width:105px;height:33px;background:rgba(249,250,251,.93)"></div>
<div class="abs" style="left:101px;top:267px;width:12px;height:12px;background:#e9eef8"></div>
<div class="abs" style="left:113px;top:267px;width:12px;height:12px;background:#e6ecf8"></div>
<div class="abs" style="left:125px;top:267px;width:12px;height:12px;background:#e9eef8"></div>
<div class="abs" style="left:137px;top:267px;width:12px;height:12px;background:#e7ecf8"></div>
<div class="abs" style="left:149px;top:267px;width:12px;height:12px;background:#e6edf8"></div>
<div class="abs" style="left:161px;top:267px;width:12px;height:12px;background:#e8eef8"></div>
<div class="abs" style="left:173px;top:267px;width:12px;height:12px;background:#ecf0f8"></div>
<div class="abs" style="left:185px;top:267px;width:12px;height:12px;background:#eef1f8"></div>
<div class="abs" style="left:305px;top:267px;width:12px;height:12px;background:#e9e9e9"></div>
<div class="abs" style="left:317px;top:267px;width:12px;height:12px;background:#e8e8e8"></div>
<div class="abs" style="left:329px;top:267px;width:12px;height:12px;background:#e9e9e9"></div>
<div class="abs" style="left:341px;top:267px;width:12px;height:12px;background:#e9e9e9"></div>
<div class="abs" style="left:353px;top:267px;width:12px;height:12px;background:#ececec"></div>
<div class="abs" style="left:365px;top:267px;width:12px;height:12px;background:#e8e8e8"></div>
<div class="abs" style="left:101px;top:279px;width:12px;height:12px;background:#e1e7f7"></div>
<div class="abs" style="left:113px;top:279px;width:12px;height:12px;background:#d6e3f7"></div>
<div class="abs" style="left:125px;top:279px;width:12px;height:12px;background:#e0e7f7"></div>
<div class="abs" style="left:137px;top:279px;width:12px;height:12px;background:#e2e7f8"></div>
<div class="abs" style="left:149px;top:279px;width:12px;height:12px;background:#eceff8"></div>
<div class="abs" style="left:161px;top:279px;width:12px;height:12px;background:#dbe6f8"></div>
<div class="abs" style="left:173px;top:279px;width:12px;height:12px;background:#dee6f7"></div>
<div class="abs" style="left:185px;top:279px;width:12px;height:12px;background:#edf0f8"></div>
<div class="abs" style="left:305px;top:279px;width:12px;height:12px;background:#dcdcdc"></div>
<div class="abs" style="left:317px;top:279px;width:12px;height:12px;background:#dddbda"></div>
<div class="abs" style="left:329px;top:279px;width:12px;height:12px;background:#d9d9d9"></div>
<div class="abs" style="left:341px;top:279px;width:12px;height:12px;background:#dcdcdc"></div>
<div class="abs" style="left:353px;top:279px;width:12px;height:12px;background:#e2e2e2"></div>
<div class="abs" style="left:365px;top:279px;width:12px;height:12px;background:#d6d6d6"></div>
<div class="abs" style="left:9px;top:308px;width:12px;height:12px;border:1px solid #d4d7de;border-radius:2px;background:#fff"></div>
<div class="abs td" style="left:28px;top:298px;width:64px;">99</div>
<div class="abs td" style="left:196px;top:298px;width:96px;">其他</div>
<div class="abs td" style="left:388px;top:298px;width:72px;color:#3d8bf0">测试分组2</div>
<div class="abs td" style="left:460px;top:298px;width:72px;">湖北省-...</div>
<div class="abs td" style="left:532px;top:298px;width:56px;">移动</div>
<div class="abs td" style="left:588px;top:298px;width:96px;">-</div>
<div class="abs tag" style="left:723.0px;top:304px;width:36px;background:#d6d6d6;color:#9b9b9b">库存</div>
<div class="abs tag" style="left:827.0px;top:304px;width:36px;background:#d6d6d6;color:#9b9b9b">离线</div>
<div class="abs tag" style="left:923.0px;top:304px;width:36px;background:#35b326;color:#fff">正常</div>
<div class="abs td" style="left:988px;top:298px;width:72px;">2018版...</div>
<div class="abs td" style="left:1060px;top:298px;width:80px;">3.00</div>
<div class="abs td" style="left:1140px;top:298px;width:104px;">-</div>
<div class="abs td" style="left:1244px;top:298px;width:144px;">2.22</div>
<div class="abs" style="left:92px;top:298px;width:107px;height:33px;background:rgba(249,250,251,.93)"></div>
<div class="abs" style="left:287px;top:298px;width:105px;height:33px;background:rgba(249,250,251,.93)"></div>
<div class="abs" style="left:101px;top:303px;width:12px;height:12px;background:#e1e8fb"></div>
<div class="abs" style="left:113px;top:303px;width:12px;height:12px;background:#d4e4f8"></div>
<div class="abs" style="left:125px;top:303px;width:12px;height:12px;background:#e2eafa"></div>
<div class="abs" style="left:137px;top:303px;width:12px;height:12px;background:#eef3fd"></div>
<div class="abs" style="left:149px;top:303px;width:12px;height:12px;background:#dee8f9"></div>
<div class="abs" style="left:161px;top:303px;width:12px;height:12px;background:#d9e5f9"></div>
<div class="abs" style="left:173px;top:303px;width:12px;height:12px;background:#e3eafb"></div>
<div class="abs" style="left:185px;top:303px;width:12px;height:12px;background:#f1f5fd"></div>
<div class="abs" style="left:305px;top:303px;width:12px;height:12px;background:#ebe9ea"></div>
<div class="abs" style="left:317px;top:303px;width:12px;height:12px;background:#e6e3e5"></div>
<div class="abs" style="left:329px;top:303px;width:12px;height:12px;background:#ebebeb"></div>
<div class="abs" style="left:341px;top:303px;width:12px;height:12px;background:#e6e3e5"></div>
<div class="abs" style="left:353px;top:303px;width:12px;height:12px;background:#eaeaea"></div>
<div class="abs" style="left:365px;top:303px;width:12px;height:12px;background:#f0f0f0"></div>
<div class="abs" style="left:101px;top:315px;width:12px;height:12px;background:#f6f8fd"></div>
<div class="abs" style="left:113px;top:315px;width:12px;height:12px;background:#f1f5fd"></div>
<div class="abs" style="left:125px;top:315px;width:12px;height:12px;background:#f3f6fd"></div>
<div class="abs" style="left:137px;top:315px;width:12px;height:12px;background:#f3f6fd"></div>
<div class="abs" style="left:149px;top:315px;width:12px;height:12px;background:#f7f9fd"></div>
<div class="abs" style="left:161px;top:315px;width:12px;height:12px;background:#f1f5fd"></div>
<div class="abs" style="left:173px;top:315px;width:12px;height:12px;background:#f3f6fd"></div>
<div class="abs" style="left:305px;top:315px;width:12px;height:12px;background:#efefef"></div>
<div class="abs" style="left:317px;top:315px;width:12px;height:12px;background:#e9e7e8"></div>
<div class="abs" style="left:329px;top:315px;width:12px;height:12px;background:#eeeeee"></div>
<div class="abs" style="left:341px;top:315px;width:12px;height:12px;background:#ebe9ea"></div>
<div class="abs" style="left:353px;top:315px;width:12px;height:12px;background:#efefef"></div>
<div class="abs" style="left:365px;top:315px;width:12px;height:12px;background:#f1f1f1"></div>
<div class="abs" style="left:9px;top:341px;width:12px;height:12px;border:1px solid #d4d7de;border-radius:2px;background:#fff"></div>
<div class="abs td" style="left:28px;top:331px;width:64px;">100</div>
<div class="abs td" style="left:196px;top:331px;width:96px;">其他</div>
<div class="abs td" style="left:388px;top:331px;width:72px;color:#3d8bf0">测试分组2</div>
<div class="abs td" style="left:460px;top:331px;width:72px;">湖北省-...</div>
<div class="abs td" style="left:532px;top:331px;width:56px;">移动</div>
<div class="abs td" style="left:588px;top:331px;width:96px;">-</div>
<div class="abs tag" style="left:718.0px;top:337px;width:46px;background:#35b326;color:#fff">已激活</div>
<div class="abs tag" style="left:827.0px;top:337px;width:36px;background:#d6d6d6;color:#9b9b9b">离线</div>
<div class="abs tag" style="left:923.0px;top:337px;width:36px;background:#35b326;color:#fff">正常</div>
<div class="abs td" style="left:988px;top:331px;width:72px;">2018版...</div>
<div class="abs td" style="left:1060px;top:331px;width:80px;">2.00</div>
<div class="abs td" style="left:1140px;top:331px;width:104px;">-</div>
<div class="abs td" style="left:1244px;top:331px;width:144px;">6.66</div>
<div class="abs" style="left:92px;top:331px;width:107px;height:33px;background:rgba(249,250,251,.93)"></div>
<div class="abs" style="left:287px;top:331px;width:105px;height:33px;background:rgba(249,250,251,.93)"></div>
<div class="abs" style="left:101px;top:339px;width:12px;height:12px;background:#dde2f6"></div>
<div class="abs" style="left:113px;top:339px;width:12px;height:12px;background:#c9dbf6"></div>
<div class="abs" style="left:125px;top:339px;width:12px;height:12px;background:#d2e0f7"></div>
<div class="abs" style="left:137px;top:339px;width:12px;height:12px;background:#cfdef6"></div>
<div class="abs" style="left:149px;top:339px;width:12px;height:12px;background:#dae5f8"></div>
<div class="abs" style="left:161px;top:339px;width:12px;height:12px;background:#cddff7"></div>
<div class="abs" style="left:173px;top:339px;width:12px;height:12px;background:#d4e1f7"></div>
<div class="abs" style="left:305px;top:339px;width:12px;height:12px;background:#c8c8c8"></div>
<div class="abs" style="left:317px;top:339px;width:12px;height:12px;background:#d3d3d3"></div>
<div class="abs" style="left:329px;top:339px;width:12px;height:12px;background:#d9d9d9"></div>
<div class="abs" style="left:341px;top:339px;width:12px;height:12px;background:#cdcdcd"></div>
<div class="abs" style="left:353px;top:339px;width:12px;height:12px;background:#dddde0"></div>
<div class="abs" style="left:365px;top:339px;width:12px;height:12px;background:#cbcbcb"></div>
<div class="abs" style="left:1369px;top:0;width:284px;height:364px;box-shadow:-3px 0 6px rgba(0,0,0,.06)">
<div class="abs" style="left:0;top:0;width:284px;height:34px;background:#f3f6fa;border-top:1px solid #e9edf3;border-bottom:1px solid #e9edf3"></div>
<div class="abs th" style="left:0;width:284px">操作</div>
<div class="abs" style="left:0;top:34px;width:284px;height:33px;background:#fff;border-bottom:1px solid #ebeef5"></div>
<div class="abs btn dis" style="left:24px;top:39px"><svg class="abs" style="left:17px;top:4px" width="11" height="13" viewBox="0 0 11 13"><path d="M2.8 6.2V3.6a2.7 2.7 0 0 1 5.4 0" fill="none" stroke="#aaa" stroke-width="1.1"/><rect x="1.3" y="6.2" width="8.4" height="5.6" rx="1" fill="none" stroke="#aaa" stroke-width="1.1"/><path d="M3.8 8.6l1.5 1.3 2-2" fill="none" stroke="#aaa" stroke-width="1"/></svg><span class="abs" style="left:33px">启用</span></div>
<div class="abs btn" style="left:112px;top:39px"><svg class="abs" style="left:7px;top:5px" width="10" height="10" viewBox="0 0 10 10"><path d="M2.2 6.8L6.6 1.6 8.2 2.9 3.9 8 1.8 8.4z" fill="none" stroke="#fff" stroke-width="1.2" stroke-linejoin="round"/><path d="M1 9.3h8" stroke="#fff" stroke-width="1.1"/></svg><span class="abs" style="left:22px">主动采集</span></div>
<div class="abs btn" style="left:200px;top:39px"><svg class="abs" style="left:16px;top:3px" width="14" height="14" viewBox="0 0 14 14"><circle cx="7" cy="7" r="5.8" fill="none" stroke="#fff" stroke-width="1.3"/><circle cx="4.5" cy="7" r=".9" fill="#fff"/><circle cx="7" cy="7" r=".9" fill="#fff"/><circle cx="9.5" cy="7" r=".9" fill="#fff"/></svg><span class="abs" style="left:33px">更多</span></div>
<div class="abs" style="left:0;top:67px;width:284px;height:33px;background:#fafafa;border-bottom:1px solid #ebeef5"></div>
<div class="abs btn" style="left:24px;top:72px"><svg class="abs" style="left:17px;top:5px" width="11" height="11" viewBox="0 0 11 11"><path d="M3.2 5V3.4a2.3 2.3 0 0 1 4.6 0V5" fill="none" stroke="#fff" stroke-width="1.3"/><rect x="1.4" y="5.3" width="8.2" height="4.3" fill="none" stroke="#fff" stroke-width="1.3"/></svg><span class="abs" style="left:33px">停用</span></div>
<div class="abs btn" style="left:112px;top:72px"><svg class="abs" style="left:7px;top:5px" width="10" height="10" viewBox="0 0 10 10"><path d="M2.2 6.8L6.6 1.6 8.2 2.9 3.9 8 1.8 8.4z" fill="none" stroke="#fff" stroke-width="1.2" stroke-linejoin="round"/><path d="M1 9.3h8" stroke="#fff" stroke-width="1.1"/></svg><span class="abs" style="left:22px">主动采集</span></div>
<div class="abs btn" style="left:200px;top:72px"><svg class="abs" style="left:16px;top:3px" width="14" height="14" viewBox="0 0 14 14"><circle cx="7" cy="7" r="5.8" fill="none" stroke="#fff" stroke-width="1.3"/><circle cx="4.5" cy="7" r=".9" fill="#fff"/><circle cx="7" cy="7" r=".9" fill="#fff"/><circle cx="9.5" cy="7" r=".9" fill="#fff"/></svg><span class="abs" style="left:33px">更多</span></div>
<div class="abs" style="left:0;top:100px;width:284px;height:33px;background:#fff;border-bottom:1px solid #ebeef5"></div>
<div class="abs btn" style="left:24px;top:105px"><svg class="abs" style="left:17px;top:5px" width="11" height="11" viewBox="0 0 11 11"><path d="M3.2 5V3.4a2.3 2.3 0 0 1 4.6 0V5" fill="none" stroke="#fff" stroke-width="1.3"/><rect x="1.4" y="5.3" width="8.2" height="4.3" fill="none" stroke="#fff" stroke-width="1.3"/></svg><span class="abs" style="left:33px">停用</span></div>
<div class="abs btn" style="left:112px;top:105px"><svg class="abs" style="left:7px;top:5px" width="10" height="10" viewBox="0 0 10 10"><path d="M2.2 6.8L6.6 1.6 8.2 2.9 3.9 8 1.8 8.4z" fill="none" stroke="#fff" stroke-width="1.2" stroke-linejoin="round"/><path d="M1 9.3h8" stroke="#fff" stroke-width="1.1"/></svg><span class="abs" style="left:22px">主动采集</span></div>
<div class="abs btn" style="left:200px;top:105px"><svg class="abs" style="left:16px;top:3px" width="14" height="14" viewBox="0 0 14 14"><circle cx="7" cy="7" r="5.8" fill="none" stroke="#fff" stroke-width="1.3"/><circle cx="4.5" cy="7" r=".9" fill="#fff"/><circle cx="7" cy="7" r=".9" fill="#fff"/><circle cx="9.5" cy="7" r=".9" fill="#fff"/></svg><span class="abs" style="left:33px">更多</span></div>
<div class="abs" style="left:0;top:133px;width:284px;height:33px;background:#fafafa;border-bottom:1px solid #ebeef5"></div>
<div class="abs btn" style="left:24px;top:138px"><svg class="abs" style="left:17px;top:5px" width="11" height="11" viewBox="0 0 11 11"><path d="M3.2 5V3.4a2.3 2.3 0 0 1 4.6 0V5" fill="none" stroke="#fff" stroke-width="1.3"/><rect x="1.4" y="5.3" width="8.2" height="4.3" fill="none" stroke="#fff" stroke-width="1.3"/></svg><span class="abs" style="left:33px">停用</span></div>
<div class="abs btn" style="left:112px;top:138px"><svg class="abs" style="left:7px;top:5px" width="10" height="10" viewBox="0 0 10 10"><path d="M2.2 6.8L6.6 1.6 8.2 2.9 3.9 8 1.8 8.4z" fill="none" stroke="#fff" stroke-width="1.2" stroke-linejoin="round"/><path d="M1 9.3h8" stroke="#fff" stroke-width="1.1"/></svg><span class="abs" style="left:22px">主动采集</span></div>
<div class="abs btn" style="left:200px;top:138px"><svg class="abs" style="left:16px;top:3px" width="14" height="14" viewBox="0 0 14 14"><circle cx="7" cy="7" r="5.8" fill="none" stroke="#fff" stroke-width="1.3"/><circle cx="4.5" cy="7" r=".9" fill="#fff"/><circle cx="7" cy="7" r=".9" fill="#fff"/><circle cx="9.5" cy="7" r=".9" fill="#fff"/></svg><span class="abs" style="left:33px">更多</span></div>
<div class="abs" style="left:0;top:166px;width:284px;height:33px;background:#fff;border-bottom:1px solid #ebeef5"></div>
<div class="abs btn dis" style="left:24px;top:171px"><svg class="abs" style="left:17px;top:4px" width="11" height="13" viewBox="0 0 11 13"><path d="M2.8 6.2V3.6a2.7 2.7 0 0 1 5.4 0" fill="none" stroke="#aaa" stroke-width="1.1"/><rect x="1.3" y="6.2" width="8.4" height="5.6" rx="1" fill="none" stroke="#aaa" stroke-width="1.1"/><path d="M3.8 8.6l1.5 1.3 2-2" fill="none" stroke="#aaa" stroke-width="1"/></svg><span class="abs" style="left:33px">启用</span></div>
<div class="abs btn" style="left:112px;top:171px"><svg class="abs" style="left:7px;top:5px" width="10" height="10" viewBox="0 0 10 10"><path d="M2.2 6.8L6.6 1.6 8.2 2.9 3.9 8 1.8 8.4z" fill="none" stroke="#fff" stroke-width="1.2" stroke-linejoin="round"/><path d="M1 9.3h8" stroke="#fff" stroke-width="1.1"/></svg><span class="abs" style="left:22px">主动采集</span></div>
<div class="abs btn" style="left:200px;top:171px"><svg class="abs" style="left:16px;top:3px" width="14" height="14" viewBox="0 0 14 14"><circle cx="7" cy="7" r="5.8" fill="none" stroke="#fff" stroke-width="1.3"/><circle cx="4.5" cy="7" r=".9" fill="#fff"/><circle cx="7" cy="7" r=".9" fill="#fff"/><circle cx="9.5" cy="7" r=".9" fill="#fff"/></svg><span class="abs" style="left:33px">更多</span></div>
<div class="abs" style="left:0;top:199px;width:284px;height:33px;background:#fafafa;border-bottom:1px solid #ebeef5"></div>
<div class="abs btn dis" style="left:24px;top:204px"><svg class="abs" style="left:17px;top:4px" width="11" height="13" viewBox="0 0 11 13"><path d="M2.8 6.2V3.6a2.7 2.7 0 0 1 5.4 0" fill="none" stroke="#aaa" stroke-width="1.1"/><rect x="1.3" y="6.2" width="8.4" height="5.6" rx="1" fill="none" stroke="#aaa" stroke-width="1.1"/><path d="M3.8 8.6l1.5 1.3 2-2" fill="none" stroke="#aaa" stroke-width="1"/></svg><span class="abs" style="left:33px">启用</span></div>
<div class="abs btn" style="left:112px;top:204px"><svg class="abs" style="left:7px;top:5px" width="10" height="10" viewBox="0 0 10 10"><path d="M2.2 6.8L6.6 1.6 8.2 2.9 3.9 8 1.8 8.4z" fill="none" stroke="#fff" stroke-width="1.2" stroke-linejoin="round"/><path d="M1 9.3h8" stroke="#fff" stroke-width="1.1"/></svg><span class="abs" style="left:22px">主动采集</span></div>
<div class="abs btn" style="left:200px;top:204px"><svg class="abs" style="left:16px;top:3px" width="14" height="14" viewBox="0 0 14 14"><circle cx="7" cy="7" r="5.8" fill="none" stroke="#fff" stroke-width="1.3"/><circle cx="4.5" cy="7" r=".9" fill="#fff"/><circle cx="7" cy="7" r=".9" fill="#fff"/><circle cx="9.5" cy="7" r=".9" fill="#fff"/></svg><span class="abs" style="left:33px">更多</span></div>
<div class="abs" style="left:0;top:232px;width:284px;height:33px;background:#fff;border-bottom:1px solid #ebeef5"></div>
<div class="abs btn" style="left:24px;top:237px"><svg class="abs" style="left:17px;top:5px" width="11" height="11" viewBox="0 0 11 11"><path d="M3.2 5V3.4a2.3 2.3 0 0 1 4.6 0V5" fill="none" stroke="#fff" stroke-width="1.3"/><rect x="1.4" y="5.3" width="8.2" height="4.3" fill="none" stroke="#fff" stroke-width="1.3"/></svg><span class="abs" style="left:33px">停用</span></div>
<div class="abs btn" style="left:112px;top:237px"><svg class="abs" style="left:7px;top:5px" width="10" height="10" viewBox="0 0 10 10"><path d="M2.2 6.8L6.6 1.6 8.2 2.9 3.9 8 1.8 8.4z" fill="none" stroke="#fff" stroke-width="1.2" stroke-linejoin="round"/><path d="M1 9.3h8" stroke="#fff" stroke-width="1.1"/></svg><span class="abs" style="left:22px">主动采集</span></div>
<div class="abs btn" style="left:200px;top:237px"><svg class="abs" style="left:16px;top:3px" width="14" height="14" viewBox="0 0 14 14"><circle cx="7" cy="7" r="5.8" fill="none" stroke="#fff" stroke-width="1.3"/><circle cx="4.5" cy="7" r=".9" fill="#fff"/><circle cx="7" cy="7" r=".9" fill="#fff"/><circle cx="9.5" cy="7" r=".9" fill="#fff"/></svg><span class="abs" style="left:33px">更多</span></div>
<div class="abs" style="left:0;top:265px;width:284px;height:33px;background:#fafafa;border-bottom:1px solid #ebeef5"></div>
<div class="abs btn" style="left:24px;top:270px"><svg class="abs" style="left:17px;top:5px" width="11" height="11" viewBox="0 0 11 11"><path d="M3.2 5V3.4a2.3 2.3 0 0 1 4.6 0V5" fill="none" stroke="#fff" stroke-width="1.3"/><rect x="1.4" y="5.3" width="8.2" height="4.3" fill="none" stroke="#fff" stroke-width="1.3"/></svg><span class="abs" style="left:33px">停用</span></div>
<div class="abs btn" style="left:112px;top:270px"><svg class="abs" style="left:7px;top:5px" width="10" height="10" viewBox="0 0 10 10"><path d="M2.2 6.8L6.6 1.6 8.2 2.9 3.9 8 1.8 8.4z" fill="none" stroke="#fff" stroke-width="1.2" stroke-linejoin="round"/><path d="M1 9.3h8" stroke="#fff" stroke-width="1.1"/></svg><span class="abs" style="left:22px">主动采集</span></div>
<div class="abs btn" style="left:200px;top:270px"><svg class="abs" style="left:16px;top:3px" width="14" height="14" viewBox="0 0 14 14"><circle cx="7" cy="7" r="5.8" fill="none" stroke="#fff" stroke-width="1.3"/><circle cx="4.5" cy="7" r=".9" fill="#fff"/><circle cx="7" cy="7" r=".9" fill="#fff"/><circle cx="9.5" cy="7" r=".9" fill="#fff"/></svg><span class="abs" style="left:33px">更多</span></div>
<div class="abs" style="left:0;top:298px;width:284px;height:33px;background:#fff;border-bottom:1px solid #ebeef5"></div>
<div class="abs btn dis" style="left:24px;top:303px"><svg class="abs" style="left:17px;top:4px" width="11" height="13" viewBox="0 0 11 13"><path d="M2.8 6.2V3.6a2.7 2.7 0 0 1 5.4 0" fill="none" stroke="#aaa" stroke-width="1.1"/><rect x="1.3" y="6.2" width="8.4" height="5.6" rx="1" fill="none" stroke="#aaa" stroke-width="1.1"/><path d="M3.8 8.6l1.5 1.3 2-2" fill="none" stroke="#aaa" stroke-width="1"/></svg><span class="abs" style="left:33px">启用</span></div>
<div class="abs btn" style="left:112px;top:303px"><svg class="abs" style="left:7px;top:5px" width="10" height="10" viewBox="0 0 10 10"><path d="M2.2 6.8L6.6 1.6 8.2 2.9 3.9 8 1.8 8.4z" fill="none" stroke="#fff" stroke-width="1.2" stroke-linejoin="round"/><path d="M1 9.3h8" stroke="#fff" stroke-width="1.1"/></svg><span class="abs" style="left:22px">主动采集</span></div>
<div class="abs btn" style="left:200px;top:303px"><svg class="abs" style="left:16px;top:3px" width="14" height="14" viewBox="0 0 14 14"><circle cx="7" cy="7" r="5.8" fill="none" stroke="#fff" stroke-width="1.3"/><circle cx="4.5" cy="7" r=".9" fill="#fff"/><circle cx="7" cy="7" r=".9" fill="#fff"/><circle cx="9.5" cy="7" r=".9" fill="#fff"/></svg><span class="abs" style="left:33px">更多</span></div>
<div class="abs" style="left:0;top:331px;width:284px;height:33px;background:#fafafa;border-bottom:1px solid #ebeef5"></div>
<div class="abs btn" style="left:24px;top:336px"><svg class="abs" style="left:17px;top:5px" width="11" height="11" viewBox="0 0 11 11"><path d="M3.2 5V3.4a2.3 2.3 0 0 1 4.6 0V5" fill="none" stroke="#fff" stroke-width="1.3"/><rect x="1.4" y="5.3" width="8.2" height="4.3" fill="none" stroke="#fff" stroke-width="1.3"/></svg><span class="abs" style="left:33px">停用</span></div>
<div class="abs btn" style="left:112px;top:336px"><svg class="abs" style="left:7px;top:5px" width="10" height="10" viewBox="0 0 10 10"><path d="M2.2 6.8L6.6 1.6 8.2 2.9 3.9 8 1.8 8.4z" fill="none" stroke="#fff" stroke-width="1.2" stroke-linejoin="round"/><path d="M1 9.3h8" stroke="#fff" stroke-width="1.1"/></svg><span class="abs" style="left:22px">主动采集</span></div>
<div class="abs btn" style="left:200px;top:336px"><svg class="abs" style="left:16px;top:3px" width="14" height="14" viewBox="0 0 14 14"><circle cx="7" cy="7" r="5.8" fill="none" stroke="#fff" stroke-width="1.3"/><circle cx="4.5" cy="7" r=".9" fill="#fff"/><circle cx="7" cy="7" r=".9" fill="#fff"/><circle cx="9.5" cy="7" r=".9" fill="#fff"/></svg><span class="abs" style="left:33px">更多</span></div>
<div class="abs" style="left:284px;top:0;width:1px;height:364px;background:#e9ecf4"></div>
</div>
</div>
<div class="abs" style="left:235px;top:724px;width:1654px;height:18px;background:#f1f1f1"></div>
<div class="abs" style="left:253px;top:727px;width:1411px;height:13px;background:#c1c1c1"></div>
<svg class="abs" style="left:240px;top:729px" width="8" height="9" viewBox="0 0 8 9"><path d="M6 0.5L1.5 4.5 6 8.5z" fill="#a3a3a3"/></svg>
<svg class="abs" style="left:1877px;top:729px" width="8" height="9" viewBox="0 0 8 9"><path d="M2 0.5L6.5 4.5 2 8.5z" fill="#505050"/></svg>
<div class="abs" style="left:235px;top:755px;font-size:13px;line-height:20px;color:#999">每页显示:</div>
<div class="abs" style="left:299px;top:755px;width:58px;height:20px;border:1px solid #c8c8c8;border-radius:3px;font-size:12px;line-height:18px;color:#aaa;padding-left:13px">10<i class="abs" style="left:40px;top:8px;width:0;height:0;border-left:3.5px solid transparent;border-right:3.5px solid transparent;border-top:4px solid #b4b4b4"></i></div>
<div class="abs" style="left:360px;top:755px;font-size:13px;line-height:20px;color:#999">条</div>
<div class="abs pg" style="left:1412px"><svg class="abs" style="left:6px;top:5px" width="7" height="9" viewBox="0 0 7 9"><path d="M5.5 0.8L1.8 4.5 5.5 8.2" fill="none" stroke="#aaa" stroke-width="1.1"/></svg></div>
<div class="abs pg" style="left:1437px">1</div>
<div class="abs pg" style="left:1462px"><svg class="abs" style="left:4px;top:8px" width="11" height="3" viewBox="0 0 11 3"><circle cx="1.8" cy="1.5" r="1.2" fill="#aaa"/><circle cx="5.5" cy="1.5" r="1.2" fill="#aaa"/><circle cx="9.2" cy="1.5" r="1.2" fill="#aaa"/></svg></div>
<div class="abs pg" style="left:1487px">8</div>
<div class="abs pg" style="left:1511px">9</div>
<div class="abs pg" style="left:1536px;background:#1f88ee;border-color:#1f88ee;color:#fff;font-weight:bold">10</div>
<div class="abs pg" style="left:1561px">11</div>
<div class="abs pg" style="left:1586px">12</div>
<div class="abs pg" style="left:1611px">13</div>
<div class="abs pg" style="left:1635px"><svg class="abs" style="left:6px;top:5px" width="7" height="9" viewBox="0 0 7 9"><path d="M1.5 0.8L5.2 4.5 1.5 8.2" fill="none" stroke="#aaa" stroke-width="1.1"/></svg></div>
<div class="abs" style="left:1673px;top:755px;font-size:13px;line-height:20px;color:#999;white-space:nowrap">共 127 条</div>
<div class="abs" style="left:1749px;top:754px;font-size:13px;line-height:20px;color:#999">到第</div>
<div class="abs" style="left:1782px;top:754px;width:37px;height:20px;border:1px solid #c8c8c8;border-radius:3px;font-size:13px;line-height:18px;color:#999;text-align:center">10</div>
<div class="abs" style="left:1826px;top:754px;font-size:13px;line-height:20px;color:#999">页</div>
<div class="abs" style="left:1850px;top:754px;width:39px;height:20px;border:1px solid #c8c8c8;border-radius:3px;font-size:12px;line-height:18px;color:#999;text-align:center">确定</div>
<!--/TABLE-->
<div id="side">
<div class="mi" style="top:3.5px"><svg class="ic" viewBox="0 0 14 14"><rect x="0.9" y="0.9" width="12.2" height="8.4" rx="1.5" fill="none" stroke="#fff" stroke-width="1.4"/><path d="M4.6 7.3V5.4M6.2 7.3V3.6M7.8 7.3V4.4M9.4 7.3V5" stroke="#fff" stroke-width="1"/><path d="M7 9.6L8.8 11.6H5.2z" fill="#fff"/></svg><span class="tx">5G数据总览</span><svg class="ar" viewBox="0 0 10 6"><path d="M1 0.8L5 4.8 9 0.8" fill="none" stroke="#8a90a0" stroke-width="1.1"/></svg></div>
<div class="mi" style="top:48.5px"><svg class="ic" viewBox="0 0 14 14"><g transform="rotate(-45 7 7)" fill="none" stroke="#fff" stroke-width="1.7"><rect x="0.6" y="4.9" width="7.2" height="4.2" rx="2.1"/><rect x="6.2" y="4.9" width="7.2" height="4.2" rx="2.1"/></g></svg><span class="tx">5G专网连接管理</span><svg class="ar" viewBox="0 0 10 6"><path d="M1 5.2L5 1.2 9 5.2" fill="none" stroke="#fff" stroke-width="1.3"/></svg></div>
<div class="mi" style="top:294px"><svg class="ic" viewBox="0 0 14 14"><path d="M5 3.3Q2.2 5.2 2.3 8.3M9 3.3Q11.8 5.2 11.7 8.3M4.4 11.9Q7 13.1 9.6 11.9" fill="none" stroke="#fff" stroke-width="1.3"/><circle cx="7" cy="2.6" r="1.7" fill="#272c40" stroke="#fff" stroke-width="1.3"/><circle cx="2.6" cy="10.4" r="1.7" fill="#272c40" stroke="#fff" stroke-width="1.3"/><circle cx="11.4" cy="10.4" r="1.7" fill="#272c40" stroke="#fff" stroke-width="1.3"/></svg><span class="tx">工作流管理</span><svg class="ar" viewBox="0 0 10 6"><path d="M1 0.8L5 4.8 9 0.8" fill="none" stroke="#8a90a0" stroke-width="1.1"/></svg></div>
<div class="mi" style="top:338px"><svg class="ic" viewBox="0 0 14 14"><rect x="1.6" y="1.6" width="10.8" height="10.8" fill="none" stroke="#fff" stroke-width="1.3"/><path d="M1.6 5.3h10.8M1.6 8.7h10.8" stroke="#fff" stroke-width="1.2"/><path d="M9.5 3.5h1.3M9.5 7h1.3M9.5 10.5h1.3" stroke="#fff" stroke-width="1"/></svg><span class="tx">通信设备管理</span><svg class="ar" viewBox="0 0 10 6"><path d="M1 0.8L5 4.8 9 0.8" fill="none" stroke="#8a90a0" stroke-width="1.1"/></svg></div>
<div class="mi" style="top:382.5px"><svg class="ic" viewBox="0 0 14 14"><path d="M7 1.2L12.6 4.3 7 7.4 1.4 4.3z" fill="#272c40" stroke="#fff" stroke-width="1.3" stroke-linejoin="round"/><path d="M1.4 7L7 10.1 12.6 7M1.4 9.7L7 12.8 12.6 9.7" fill="none" stroke="#fff" stroke-width="1.3" stroke-linejoin="round"/></svg><span class="tx">5G切片管理</span><svg class="ar" viewBox="0 0 10 6"><path d="M1 0.8L5 4.8 9 0.8" fill="none" stroke="#8a90a0" stroke-width="1.1"/></svg></div>
<div class="mi" style="top:427px"><svg class="ic" viewBox="0 0 14 14"><path d="M2.8 12V6.5a4.2 4.2 0 0 1 8.4 0V12" fill="none" stroke="#fff" stroke-width="1.4"/><path d="M1 12.4h12" stroke="#fff" stroke-width="1.4"/><path d="M7.6 4L5.6 7.8h2.2L6.6 10.5" fill="none" stroke="#fff" stroke-width="1.2"/></svg><span class="tx">告警管理</span><svg class="ar" viewBox="0 0 10 6"><path d="M1 0.8L5 4.8 9 0.8" fill="none" stroke="#8a90a0" stroke-width="1.1"/></svg></div>
<div class="mi" style="top:472px"><svg class="ic" viewBox="0 0 14 14"><rect x="0.9" y="0.9" width="12.2" height="8.4" rx="1.5" fill="none" stroke="#fff" stroke-width="1.4"/><path d="M4.6 7.3V5.4M6.2 7.3V3.6M7.8 7.3V4.4M9.4 7.3V5" stroke="#fff" stroke-width="1"/><path d="M7 9.6L8.8 11.6H5.2z" fill="#fff"/></svg><span class="tx">电力业务主站管理</span><svg class="ar" viewBox="0 0 10 6"><path d="M1 0.8L5 4.8 9 0.8" fill="none" stroke="#8a90a0" stroke-width="1.1"/></svg></div>
<div class="mi" style="top:517px"><svg class="ic" viewBox="0 0 14 14"><rect x="1" y="2.3" width="12" height="9.4" rx="1" fill="none" stroke="#fff" stroke-width="1.4"/><path d="M1.5 3.2L7 7.5l5.5-4.3" fill="none" stroke="#fff" stroke-width="1.3"/></svg><span class="tx">消息管理</span><svg class="ar" viewBox="0 0 10 6"><path d="M1 0.8L5 4.8 9 0.8" fill="none" stroke="#8a90a0" stroke-width="1.1"/></svg></div>
<div class="mi" style="top:561.5px"><svg class="ic" viewBox="0 0 14 14"><rect x="2" y="1" width="10" height="12" rx="1" fill="none" stroke="#fff" stroke-width="1.3"/><path d="M4.2 4h5.6M4.2 6.5h5.6M4.2 9h5.6M2 11h10" stroke="#fff" stroke-width="1.1"/></svg><span class="tx">日志管理</span><svg class="ar" viewBox="0 0 10 6"><path d="M1 0.8L5 4.8 9 0.8" fill="none" stroke="#8a90a0" stroke-width="1.1"/></svg></div>
<div class="mi" style="top:606px"><svg class="ic" viewBox="0 0 14 14"><path d="M7 1.2l1.3 1.3 1.8-.4.5 1.8 1.8.5-.4 1.8L13.3 7.5l-1.3 1.3.4 1.8-1.8.5-.5 1.8-1.8-.4L7 13.8 5.7 12.5l-1.8.4-.5-1.8-1.8-.5.4-1.8L.7 7.5 2 6.2l-.4-1.8 1.8-.5.5-1.8 1.8.4z" transform="translate(0 -0.5)" fill="none" stroke="#fff" stroke-width="1.2" stroke-linejoin="round"/><circle cx="7" cy="7" r="2.2" fill="none" stroke="#fff" stroke-width="1.3"/></svg><span class="tx">系统管理</span><svg class="ar" viewBox="0 0 10 6"><path d="M1 0.8L5 4.8 9 0.8" fill="none" stroke="#8a90a0" stroke-width="1.1"/></svg></div>
<div class="sub" style="top:90px;background:#3e8eec;"><span>物联网卡管理</span></div>
<div class="sub" style="top:130.5px;"><span>流量池管理</span></div>
<div class="sub" style="top:171px;"><span>IP地址池管理</span></div>
<div class="sub" style="top:211px;"><span>统计分析</span></div>
<div class="sub" style="top:251px;"><span>卡异常统计</span></div>
</div>
</body></html>
